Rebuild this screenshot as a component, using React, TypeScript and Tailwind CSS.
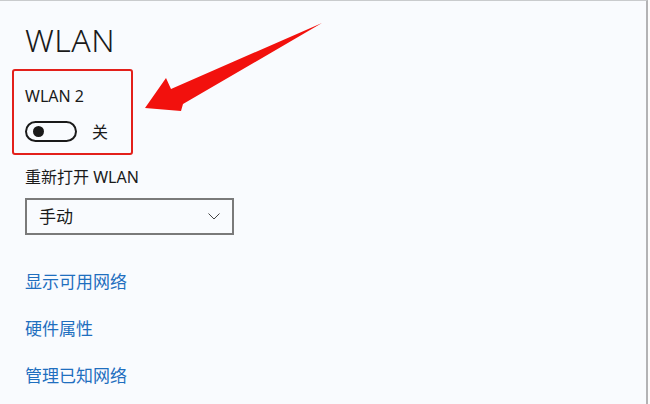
import React from "react";

export default function App() {
  const font = { fontFamily: '"Noto Sans", "Noto Sans CJK SC", sans-serif' };
  return (
    <div
      className="relative w-[650px] h-[404px] overflow-hidden bg-[#fcfcfc]"
      style={font}
    >
      <div className="w-[648px] h-[404px] bg-[#f9fbfe] border-t border-r-2 border-t-[#c9cbcd] border-r-[#b3b3b5] flex flex-col pl-[25px] text-[#1a1a1a]">
        <h1 className="mt-[19px] text-[32px] font-light leading-[40px] tracking-[0.5px]">WLAN</h1>
        <div className="mt-[9px] -ml-[13px] w-[121px] h-[86px] border-[2.5px] border-[#e3201b] rounded-[3px] pl-[11px] pt-[15px] flex flex-col">
          <div className="text-[16px] leading-[20px]">WLAN 2</div>
          <div className="mt-[15px] flex items-center">
            <div className="w-[52px] h-[21px] rounded-full border-2 border-[#1a1a1a] flex items-center pl-[6px]">
              <div className="w-[11px] h-[11px] rounded-full bg-[#1a1a1a]" />
            </div>
            <span className="ml-[15px] text-[16px] leading-[20px]">关</span>
          </div>
        </div>
        <div className="mt-[12px] text-[16px] leading-[20px]">重新打开 WLAN</div>
        <div className="mt-[11px] w-[209px] h-[37px] border-2 border-[#7a7a7a] flex items-center justify-between pl-[12px] pr-[12px]">
          <span className="text-[17px] leading-[20px]">手动</span>
          <svg width="12" height="7" viewBox="0 0 12 7" fill="none">
            <path d="M0.5 0.5 L6 6 L11.5 0.5" stroke="#444" strokeWidth="1" />
          </svg>
        </div>
        <div className="mt-[36px] flex flex-col gap-[25px] text-[17px] leading-[22px] text-[#1f6fbf]">
          <span>显示可用网络</span>
          <span>硬件属性</span>
          <span>管理已知网络</span>
        </div>
      </div>
      <svg
        className="absolute left-0 top-0 pointer-events-none"
        width="650"
        height="404"
        viewBox="0 0 650 404"
      >
        <polygon
          points="145,108 166,78 171,89 322,23 183,104 181,111"
          fill="#f2110d"
        />
      </svg>
    </div>
  );
}
